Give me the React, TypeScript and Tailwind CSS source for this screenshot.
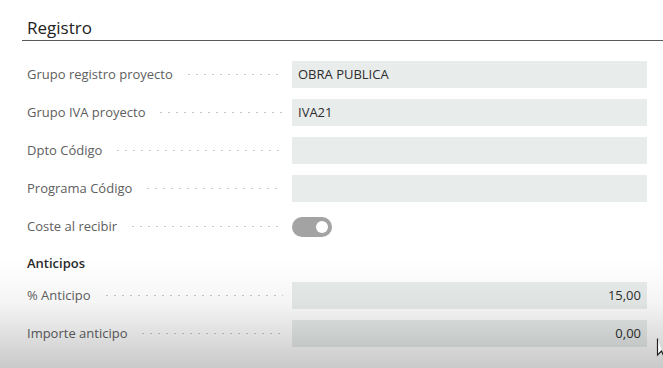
const font = { fontFamily: '"Open Sans", "Noto Sans", sans-serif' }

interface FieldRow {
  label: string
  value: string
  align?: 'left' | 'right'
}

const registroRows: FieldRow[] = [
  { label: 'Grupo registro proyecto', value: 'OBRA PUBLICA' },
  { label: 'Grupo IVA proyecto', value: 'IVA21' },
  { label: 'Dpto Código', value: '' },
  { label: 'Programa Código', value: '' },
]

const anticipoRows: FieldRow[] = [
  { label: '% Anticipo', value: '15,00', align: 'right' },
  { label: 'Importe anticipo', value: '0,00', align: 'right' },
]

function Label({ text }: { text: string }) {
  return (
    <div className="flex items-center w-[258px] shrink-0 pr-[2px]">
      <span className="text-[13px] text-[#606060] whitespace-nowrap">{text}</span>
      <span className="flex-1 ml-[12px] h-[3px] bg-[radial-gradient(circle,#c8c8c8_0.8px,transparent_1.1px)] bg-[length:8px_3px] bg-repeat-x" />
    </div>
  )
}

function Row({ row }: { row: FieldRow }) {
  return (
    <div className="flex items-center h-[27px]">
      <Label text={row.label} />
      <div
        className={`ml-[7px] w-[355px] h-[27px] bg-[#e8eceb] flex items-center px-[6px] text-[13px] text-[#2e2e2e] ${
          row.align === 'right' ? 'justify-end' : ''
        }`}
      >
        {row.value}
      </div>
    </div>
  )
}

export default function App() {
  return (
    <div className="relative w-[663px] h-[368px] bg-white overflow-hidden" style={font}>
      <div className="pl-[22px] pt-[17px]">
        <div className="border-b-[1.5px] border-[#5a5a5a] pl-[5px] pb-[1px]">
          <h2 className="text-[17px] leading-[22px] text-[#222]">Registro</h2>
        </div>
        <div className="pl-[5px] pt-[20px] flex flex-col gap-[11px]">
          {registroRows.map((row) => (
            <Row key={row.label} row={row} />
          ))}
          <div className="flex items-center h-[27px]">
            <Label text="Coste al recibir" />
            <div className="ml-[7px] w-[40px] h-[20px] rounded-full bg-[#a3a3a3] flex items-center justify-end pr-[4px]">
              <div className="w-[12px] h-[12px] rounded-full bg-white" />
            </div>
          </div>
          <div className="h-[20px] pt-[6px] flex items-center">
            <span className="text-[13px] font-semibold text-[#2a2a2a]">Anticipos</span>
          </div>
          {anticipoRows.map((row) => (
            <Row key={row.label} row={row} />
          ))}
        </div>
      </div>
      <div className="pointer-events-none absolute inset-x-0 bottom-0 h-[110px] bg-[linear-gradient(to_bottom,rgba(0,0,0,0)_0%,rgba(0,0,0,0.04)_40%,rgba(0,0,0,0.21)_100%)]" />
      <svg className="absolute left-[656px] top-[337px]" width="12" height="22" viewBox="0 0 12 22">
        <path d="M1.5 1.5 L1.5 18 L5.5 14 L8.5 20.5" fill="white" stroke="#222" strokeWidth="1.2" />
      </svg>
    </div>
  )
}
